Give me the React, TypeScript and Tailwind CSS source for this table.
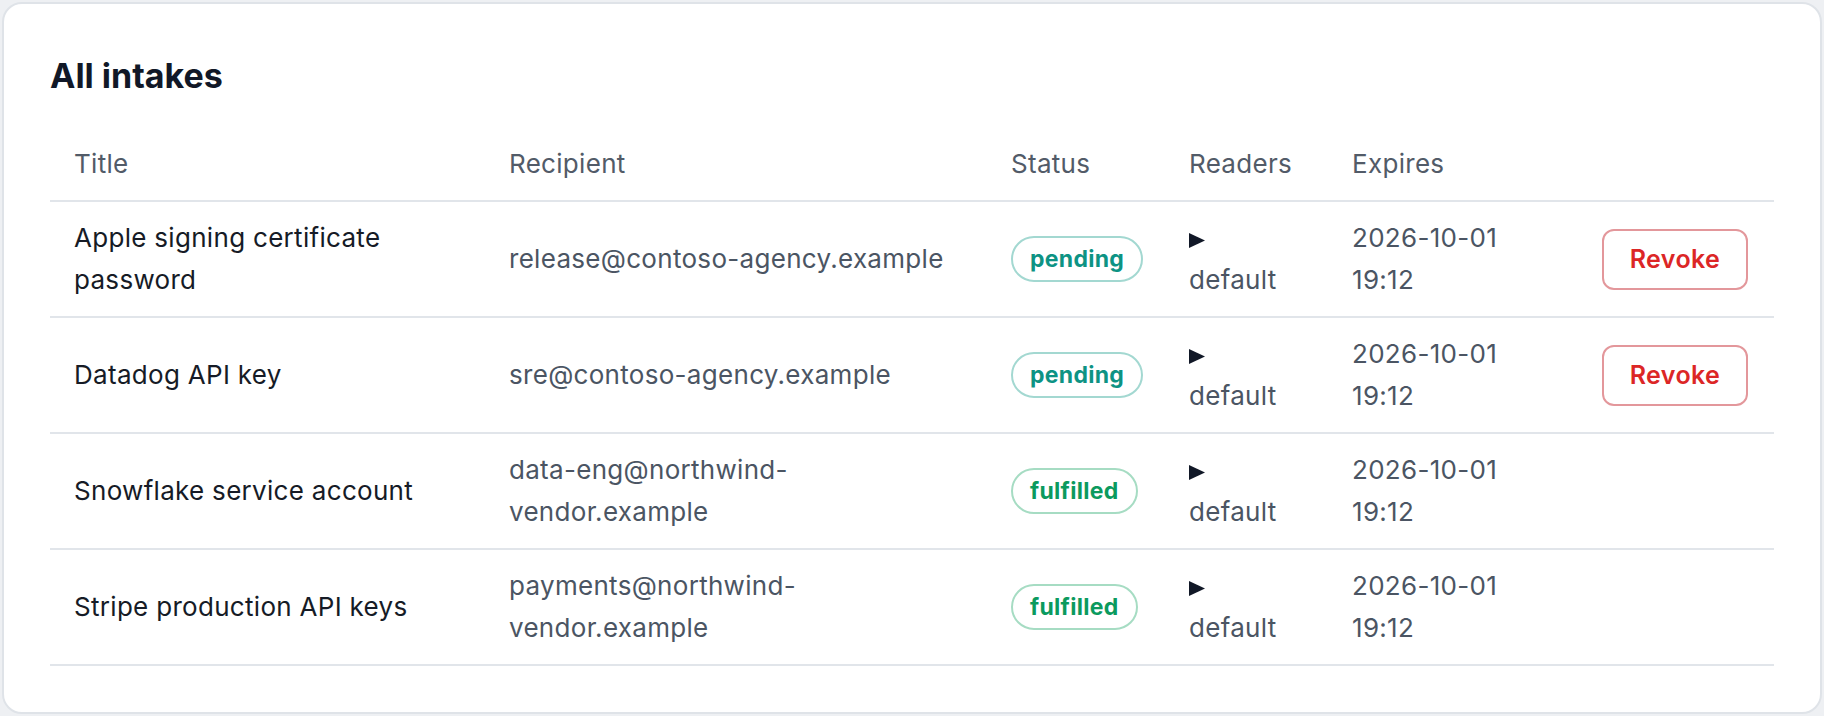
type Intake = {
  title: string;
  recipient: string;
  status: 'pending' | 'fulfilled';
  date: string;
  revocable: boolean;
};

const intakes: Intake[] = [
  {
    title: 'Apple signing certificate password',
    recipient: 'release@contoso-agency.example',
    status: 'pending',
    date: '2026-10-01 19:12',
    revocable: true,
  },
  {
    title: 'Datadog API key',
    recipient: 'sre@contoso-agency.example',
    status: 'pending',
    date: '2026-10-01 19:12',
    revocable: true,
  },
  {
    title: 'Snowflake service account',
    recipient: 'data-eng@northwind-vendor.example',
    status: 'fulfilled',
    date: '2026-10-01 19:12',
    revocable: false,
  },
  {
    title: 'Stripe production API keys',
    recipient: 'payments@northwind-vendor.example',
    status: 'fulfilled',
    date: '2026-10-01 19:12',
    revocable: false,
  },
];

const cols = 'grid grid-cols-[435px_502px_178px_163px_250px_1fr] items-center';

const StatusBadge = ({ status }: { status: Intake['status'] }) =>
  status === 'pending' ? (
    <span className="inline-flex h-[46px] items-center rounded-full border-2 border-[#a3d8d1] px-[17px] text-[23px] font-bold tracking-[0.3px] text-[#0d9384]">
      pending
    </span>
  ) : (
    <span className="inline-flex h-[46px] items-center rounded-full border-2 border-[#a6dcc3] px-[17px] text-[23px] font-bold tracking-[0.3px] text-[#0b9a5e]">
      fulfilled
    </span>
  );

// closed disclosure marker above the reader group name
const Readers = () => (
  <div className="flex flex-col">
    <div className="flex h-[42px] items-center pt-[5px]">
      <svg width="16" height="15" viewBox="0 0 16 15" className="text-[#111827]">
        <path d="M0 0 L16 7.5 L0 15 Z" fill="currentColor" />
      </svg>
    </div>
    <span>default</span>
  </div>
);

const Row = ({ intake }: { intake: Intake }) => (
  <div className={`${cols} border-b-2 border-[#e1e5ea] text-[#4b5563]`}>
    <div className="px-6 py-[15px] text-[#161b26]">{intake.title}</div>
    <div className="px-6 py-[15px]">{intake.recipient}</div>
    <div className="px-6 py-[15px]">
      <StatusBadge status={intake.status} />
    </div>
    <div className="px-6 py-[15px]">
      <Readers />
    </div>
    <div className="px-6 py-[15px]">{intake.date}</div>
    <div className="px-6 py-[15px]">
      {intake.revocable && (
        <button className="h-[61px] w-[146px] rounded-[12px] border-2 border-[#e3979b] bg-white text-[25px] font-semibold tracking-[0.4px] text-[#dc2626]">
          Revoke
        </button>
      )}
    </div>
  </div>
);

export default function App() {
  return (
    <div className="min-h-screen bg-[#eef0f3] p-[2px] font-['Inter',sans-serif]">
      <div className="rounded-[20px] border-2 border-[#dfe3e8] bg-white p-[46px]">
        <h2 className="text-[34px] leading-[52px] font-bold text-[#111827]">All intakes</h2>
        <div className="mt-[26px] text-[26px] leading-[42px] tracking-[0.3px]">
          <div className={`${cols} border-b-2 border-[#e1e5ea] text-[#525b68]`}>
            <div className="px-6 py-[15px]">Title</div>
            <div className="px-6 py-[15px]">Recipient</div>
            <div className="px-6 py-[15px]">Status</div>
            <div className="px-6 py-[15px]">Readers</div>
            <div className="px-6 py-[15px]">Expires</div>
            <div className="px-6 py-[15px]" />
          </div>
          {intakes.map((intake) => (
            <Row key={intake.title} intake={intake} />
          ))}
        </div>
      </div>
    </div>
  );
}
